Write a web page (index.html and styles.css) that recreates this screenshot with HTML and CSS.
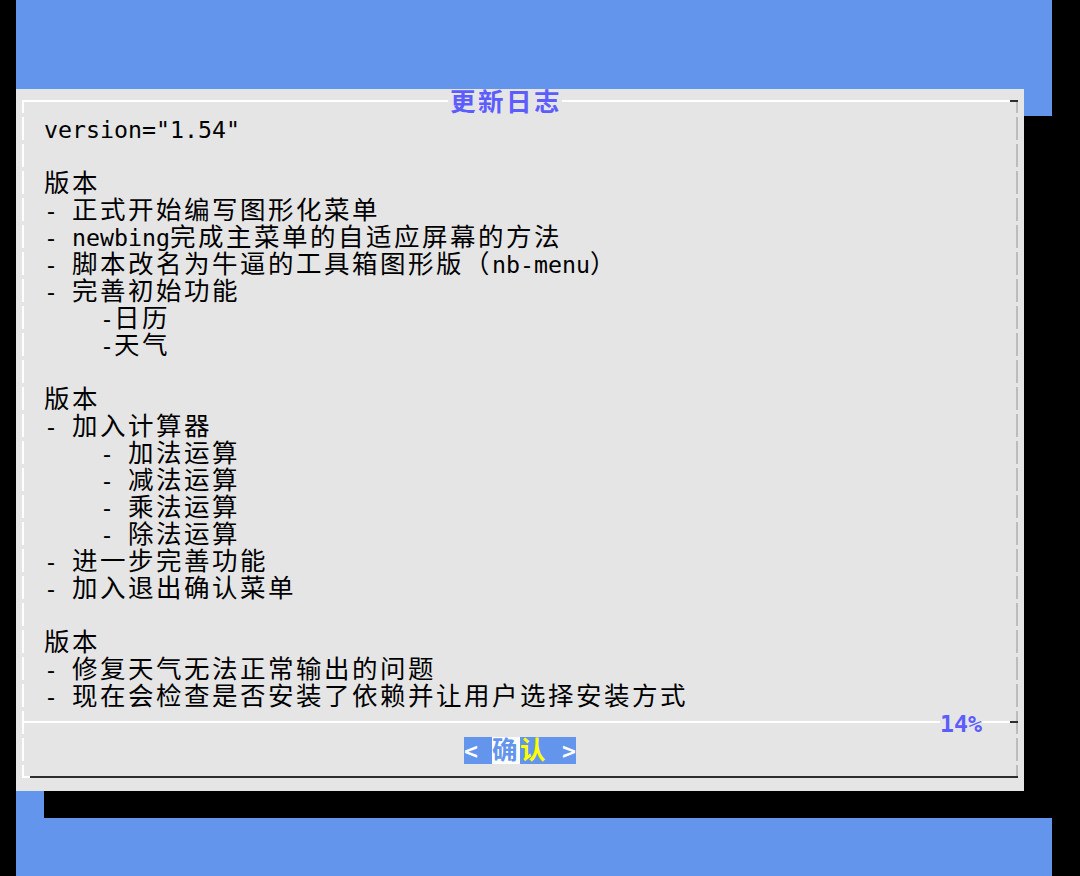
FILE: index.html
```html
<!DOCTYPE html>
<html lang="zh-CN">
<head>
<meta charset="utf-8">
<title>更新日志</title>
<link rel="stylesheet" href="styles.css">
</head>
<body>
<div class="screen">
  <div class="dialog">
    <div class="frame">
      <div class="title"><span class="c">更新日志</span></div>
      <div class="body">
        <div class="ln">version="1.54"</div>
        <div class="ln"></div>
        <div class="ln"><span class="c">版本</span></div>
        <div class="ln">- <span class="c">正式开始编写图形化菜单</span></div>
        <div class="ln">- newbing<span class="c">完成主菜单的自适应屏幕的方法</span></div>
        <div class="ln">- <span class="c">脚本改名为牛逼的工具箱图形版（</span>nb-menu<span class="c">）</span></div>
        <div class="ln">- <span class="c">完善初始功能</span></div>
        <div class="ln">    -<span class="c">日历</span></div>
        <div class="ln">    -<span class="c">天气</span></div>
        <div class="ln"></div>
        <div class="ln"><span class="c">版本</span></div>
        <div class="ln">- <span class="c">加入计算器</span></div>
        <div class="ln">    - <span class="c">加法运算</span></div>
        <div class="ln">    - <span class="c">减法运算</span></div>
        <div class="ln">    - <span class="c">乘法运算</span></div>
        <div class="ln">    - <span class="c">除法运算</span></div>
        <div class="ln">- <span class="c">进一步完善功能</span></div>
        <div class="ln">- <span class="c">加入退出确认菜单</span></div>
        <div class="ln"></div>
        <div class="ln"><span class="c">版本</span></div>
        <div class="ln">- <span class="c">修复天气无法正常输出的问题</span></div>
        <div class="ln">- <span class="c">现在会检查是否安装了依赖并让用户选择安装方式</span></div>
      </div>
      <div class="sep"><span class="pct">14%</span></div>
      <div class="btnrow"><span class="btn">&lt; <span class="c sel">确</span><span class="c hot">认</span> &gt;</span></div>
    </div>
  </div>
</div>
</body>
</html>
```

FILE: styles.css
```css
html, body {
  margin: 0;
  padding: 0;
}
body {
  background: #000;
  width: 1080px;
  height: 876px;
  overflow: hidden;
}
.screen {
  margin-left: 16px;
  width: 1036px;
  height: 876px;
  background: #6495ed;
  padding-top: 89px;
  box-sizing: border-box;
}
.dialog {
  width: 1008px;
  height: 702px;
  background: #e5e5e5;
  box-shadow: 28px 27px 0 0 #000;
  padding: 11px 6px 13px 6px;
  box-sizing: border-box;
  font-family: "DejaVu Sans Mono", "Noto Sans CJK SC", monospace;
  font-size: 23.25px;
  color: #000;
}
.frame {
  height: 678px;
  display: flex;
  flex-direction: column;
  background:
    linear-gradient(to right, #fff 0 988px, #2e2e2e 988px 996px) left top / 100% 2px no-repeat,
    linear-gradient(to right, #fff 0 8px, #2e2e2e 8px 996px) left bottom / 100% 2px no-repeat,
    repeating-linear-gradient(to bottom, #fff 0 13px, transparent 13px 17px, #fff 17px 27px) left top / 2px 100% no-repeat,
    repeating-linear-gradient(to bottom, #bcbcbc 0 13px, transparent 13px 17px, #bcbcbc 17px 27px) right top / 2px 100% no-repeat;
}
.c {
  font-size: 25.5px;
  letter-spacing: 2.5px;
}
.title {
  margin-top: -11px;
  height: 27px;
  display: flex;
  padding-left: 426px;
}
.title span {
  background: #e5e5e5;
  padding-left: 2px;
  color: #5c5cff;
  font-weight: bold;
  line-height: 27px;
}
.body {
  padding-left: 22px;
}
.ln {
  height: 27px;
  line-height: 27px;
  white-space: pre;
}
.sep {
  height: 27px;
  display: flex;
  padding-left: 918px;
  background: linear-gradient(to right, #fff 0 988px, #2e2e2e 988px 995px) 0 11px / 100% 2px no-repeat;
}
.pct {
  width: 42px;
  background: #e5e5e5;
  color: #5c5cff;
  font-weight: bold;
  line-height: 27px;
  white-space: pre;
}
.btnrow {
  height: 27px;
  display: flex;
  padding-left: 442px;
}
.btn {
  display: flex;
  white-space: pre;
  background: #6495ed;
  color: #fff;
  font-weight: bold;
  line-height: 27px;
}
.btn .sel {
  background: #fff;
  color: #6495ed;
}
.btn .hot {
  color: #ffff00;
}
```
